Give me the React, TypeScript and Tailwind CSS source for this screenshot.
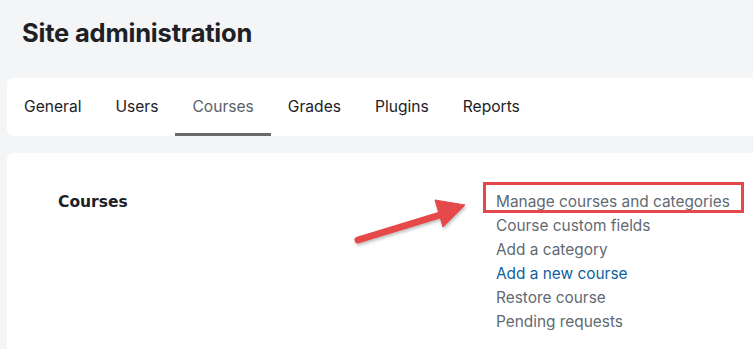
const tabs = ['General', 'Users', 'Courses', 'Grades', 'Plugins', 'Reports'];

const links = [
  { label: 'Manage courses and categories', highlight: true },
  { label: 'Course custom fields' },
  { label: 'Add a category' },
  { label: 'Add a new course', blue: true },
  { label: 'Restore course' },
  { label: 'Pending requests' },
];

function Arrow() {
  return (
    <svg className="absolute left-[350px] top-[194px]" width="124" height="56" viewBox="0 0 124 56">
      <defs>
        <filter id="sh" x="-20%" y="-20%" width="140%" height="160%">
          <feDropShadow dx="1" dy="2" stdDeviation="1.5" floodColor="#000" floodOpacity="0.25" />
        </filter>
      </defs>
      <g filter="url(#sh)" fill="#e5484a" stroke="#e5484a">
        <line x1="8" y1="46" x2="90" y2="21" strokeWidth="7" strokeLinecap="round" />
        <polygon points="115,11 85,6 93,33" strokeWidth="1" strokeLinejoin="round" />
      </g>
    </svg>
  );
}

export default function App() {
  return (
    <div className="relative w-[753px] h-[349px] overflow-hidden bg-[#f4f5f7] font-['Inter',sans-serif]">
      <h1 className="pl-[22px] pt-[14px] h-[78px] text-[25.5px] font-bold text-[#1d2125] tracking-[-0.2px]">
        Site administration
      </h1>

      <div className="ml-[7px] w-[760px] h-[58px] bg-white rounded-l-md flex">
        {tabs.map((t) => (
          <div
            key={t}
            className={`px-[17px] flex items-center text-[15.6px] border-b-[3px] ${
              t === 'Courses' ? 'border-[#6a6a6a] text-[#5b6168]' : 'border-transparent text-[#1d2125]'
            }`}
          >
            <span className="pt-[3px]">{t}</span>
          </div>
        ))}
      </div>

      <div className="mt-[17px] ml-[7px] w-[760px] h-[200px] bg-white rounded-l-md grid grid-cols-[489px_1fr] pt-[37px]">
        <div className="pl-[51px] font-['DejaVu_Sans',sans-serif] font-bold text-[15.5px] text-[#1d2125] leading-[24px]">
          Courses
        </div>
        <ul className="text-[15.4px] leading-[24px]">
          {links.map((l) => (
            <li
              key={l.label}
              className={l.blue ? 'text-[#0f5f9e]' : 'text-[#5f6a73]'}
            >
              {l.highlight ? (
                <span className="relative inline-block">
                  {l.label}
                  <span className="absolute left-[-13px] top-[-8px] w-[261px] h-[31px] border-[3px] border-[#e5484a]" />
                </span>
              ) : (
                l.label
              )}
            </li>
          ))}
        </ul>
      </div>

      <Arrow />
    </div>
  );
}
